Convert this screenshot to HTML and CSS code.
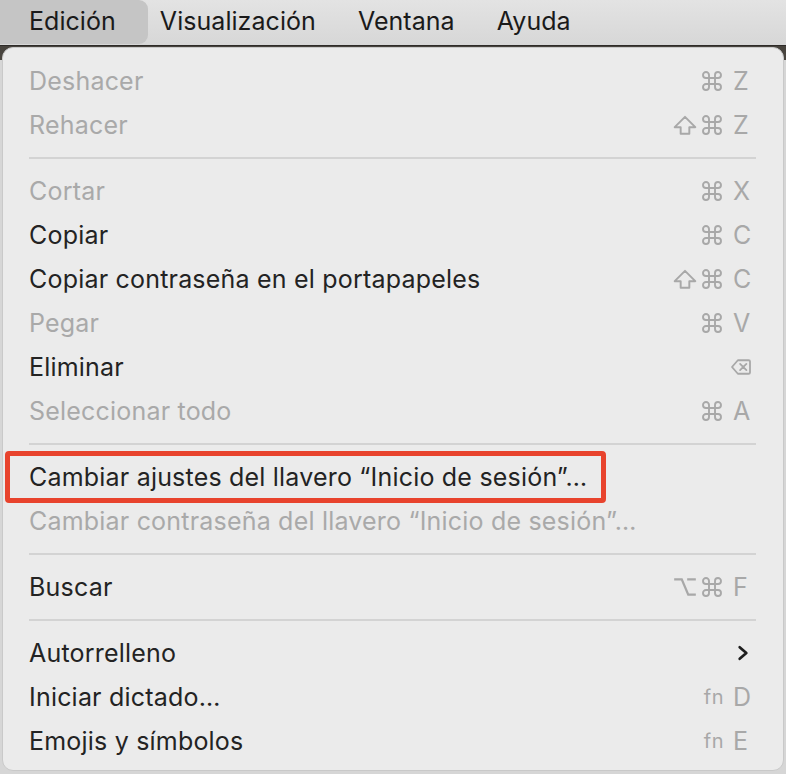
FILE: index.html
```html
<!DOCTYPE html>
<html lang="es">
<head>
<meta charset="utf-8">
<title>Edición</title>
<link rel="stylesheet" href="styles.css">
</head>
<body>
<div class="screen">
  <nav class="menubar">
    <span class="mb-item active">Edición</span>
    <span class="mb-item">Visualización</span>
    <span class="mb-item">Ventana</span>
    <span class="mb-item">Ayuda</span>
  </nav>
  <div class="menu">
    <div class="row disabled"><span class="label">Deshacer</span><span class="sc"><span class="mods"><svg class="ic" viewBox="0 0 24 24"><path d="M15 6v12a3 3 0 1 0 3-3H6a3 3 0 1 0 3 3V6a3 3 0 1 0-3 3h12a3 3 0 1 0-3-3"/></svg></span><span class="key">Z</span></span></div>
    <div class="row disabled"><span class="label">Rehacer</span><span class="sc"><span class="mods"><svg class="ic shift" viewBox="0 0 24 24"><path d="M8 20v-6H2.5L12 4.5l9.5 9.5H16v6H8z"/></svg><svg class="ic" viewBox="0 0 24 24"><path d="M15 6v12a3 3 0 1 0 3-3H6a3 3 0 1 0 3 3V6a3 3 0 1 0-3 3h12a3 3 0 1 0-3-3"/></svg></span><span class="key">Z</span></span></div>
    <div class="sep"></div>
    <div class="row disabled"><span class="label">Cortar</span><span class="sc"><span class="mods"><svg class="ic" viewBox="0 0 24 24"><path d="M15 6v12a3 3 0 1 0 3-3H6a3 3 0 1 0 3 3V6a3 3 0 1 0-3 3h12a3 3 0 1 0-3-3"/></svg></span><span class="key">X</span></span></div>
    <div class="row"><span class="label">Copiar</span><span class="sc"><span class="mods"><svg class="ic" viewBox="0 0 24 24"><path d="M15 6v12a3 3 0 1 0 3-3H6a3 3 0 1 0 3 3V6a3 3 0 1 0-3 3h12a3 3 0 1 0-3-3"/></svg></span><span class="key">C</span></span></div>
    <div class="row"><span class="label">Copiar contraseña en el portapapeles</span><span class="sc"><span class="mods"><svg class="ic shift" viewBox="0 0 24 24"><path d="M8 20v-6H2.5L12 4.5l9.5 9.5H16v6H8z"/></svg><svg class="ic" viewBox="0 0 24 24"><path d="M15 6v12a3 3 0 1 0 3-3H6a3 3 0 1 0 3 3V6a3 3 0 1 0-3 3h12a3 3 0 1 0-3-3"/></svg></span><span class="key">C</span></span></div>
    <div class="row disabled"><span class="label">Pegar</span><span class="sc"><span class="mods"><svg class="ic" viewBox="0 0 24 24"><path d="M15 6v12a3 3 0 1 0 3-3H6a3 3 0 1 0 3 3V6a3 3 0 1 0-3 3h12a3 3 0 1 0-3-3"/></svg></span><span class="key">V</span></span></div>
    <div class="row"><span class="label">Eliminar</span><span class="sc"><span class="mods"></span><span class="key"><svg class="del" viewBox="0 0 24 20"><path d="M8.5 2.5h12a1.5 1.5 0 0 1 1.5 1.5v12a1.5 1.5 0 0 1-1.5 1.5h-12L2 10z"/><path d="M11 6.5l7 7M18 6.5l-7 7"/></svg></span></span></div>
    <div class="row disabled"><span class="label">Seleccionar todo</span><span class="sc"><span class="mods"><svg class="ic" viewBox="0 0 24 24"><path d="M15 6v12a3 3 0 1 0 3-3H6a3 3 0 1 0 3 3V6a3 3 0 1 0-3 3h12a3 3 0 1 0-3-3"/></svg></span><span class="key">A</span></span></div>
    <div class="sep"></div>
    <div class="row marked"><span class="label">Cambiar ajustes del llavero “Inicio de sesión”…</span><span class="highlight-box"></span></div>
    <div class="row disabled"><span class="label">Cambiar contraseña del llavero “Inicio de sesión”…</span></div>
    <div class="sep"></div>
    <div class="row"><span class="label">Buscar</span><span class="sc"><span class="mods"><svg class="ic opt" viewBox="0 0 24 24"><path d="M2 5h7l6 14h7M14 5h8"/></svg><svg class="ic" viewBox="0 0 24 24"><path d="M15 6v12a3 3 0 1 0 3-3H6a3 3 0 1 0 3 3V6a3 3 0 1 0-3 3h12a3 3 0 1 0-3-3"/></svg></span><span class="key">F</span></span></div>
    <div class="sep"></div>
    <div class="row"><span class="label">Autorrelleno</span><span class="sc"><span class="mods"></span><span class="key"><svg class="chev" viewBox="0 0 24 24"><path d="M8 5l8 7-8 7"/></svg></span></span></div>
    <div class="row"><span class="label">Iniciar dictado…</span><span class="sc"><span class="mods fn">fn</span><span class="key">D</span></span></div>
    <div class="row"><span class="label">Emojis y símbolos</span><span class="sc"><span class="mods fn">fn</span><span class="key">E</span></span></div>
  </div>
</div>
</body>
</html>
```

FILE: styles.css
```css
* { box-sizing: border-box; }
html, body { margin: 0; padding: 0; }
body {
  width: 786px;
  height: 774px;
  overflow: hidden;
  font-family: Inter, "Noto Sans", "Liberation Sans", sans-serif;
  background: linear-gradient(to bottom, #3a3733 0, #4a4640 60px, #d6d6d6 60px, #d6d6d6 100%);
}
.screen { width: 786px; height: 774px; }

.menubar {
  height: 46px;
  display: flex;
  align-items: flex-start;
  background: linear-gradient(to bottom, #e3e3e3, #d7d7d7);
  border-bottom: 1px solid #2e2b28;
}
.mb-item {
  height: 44px;
  display: flex;
  align-items: center;
  padding: 0 21px 2px 21px;
  font-size: 25px;
  color: #1a1a1a;
  letter-spacing: 0.05px;
}
.mb-item.active {
  padding-left: 29px;
  padding-right: 32px;
  margin-right: -9px;
  background: #c5c5c5;
  border-radius: 0 9px 9px 0;
}

.menu {
  margin: 1px 2px 0 2px;
  height: 724px;
  background: #ebebeb;
  border: 1px solid #c9c9c9;
  border-radius: 11px;
  padding: 11px 0 7px 0;
}

.row {
  position: relative;
  height: 44px;
  display: flex;
  align-items: center;
  justify-content: space-between;
  padding: 0 30px 0 26px;
  font-size: 25px;
  letter-spacing: 0.2px;
  color: #232323;
}
.row.disabled { color: #a9a9a9; }
.label { white-space: nowrap; }

.sc {
  display: flex;
  align-items: center;
  color: #a8a8a8;
}
.mods {
  display: flex;
  align-items: center;
  gap: 2px;
}
.mods.fn { font-size: 20px; letter-spacing: 0.5px; }
.key {
  width: 20px;
  margin-left: 9px;
  display: flex;
  align-items: center;
  font-size: 25px;
  letter-spacing: 0;
}
.ic {
  width: 24px;
  height: 24px;
  fill: none;
  stroke: #a8a8a8;
  stroke-width: 1.9;
  stroke-linecap: round;
  stroke-linejoin: round;
}
.ic.shift { width: 26px; height: 26px; stroke-width: 1.8; }
.ic.opt { width: 26px; height: 26px; stroke-width: 2.1; stroke-linecap: butt; stroke-linejoin: miter; }
.del {
  width: 22px;
  height: 18px;
  fill: none;
  stroke: #a8a8a8;
  stroke-width: 2;
  stroke-linejoin: round;
  stroke-linecap: round;
  margin-left: -3px;
}
.chev {
  width: 24px;
  height: 24px;
  fill: none;
  stroke: #1e1e1e;
  stroke-width: 3.2;
  stroke-linecap: round;
  stroke-linejoin: round;
}

.sep {
  height: 22px;
  display: flex;
  align-items: center;
  padding: 0 27px 0 26px;
}
.sep::before {
  content: "";
  display: block;
  width: 100%;
  height: 2px;
  background: #d3d3d3;
}

.highlight-box {
  position: absolute;
  left: 2px;
  top: -4px;
  width: 601px;
  height: 52px;
  border: 5px solid #e8432d;
  border-radius: 4px;
}
```
